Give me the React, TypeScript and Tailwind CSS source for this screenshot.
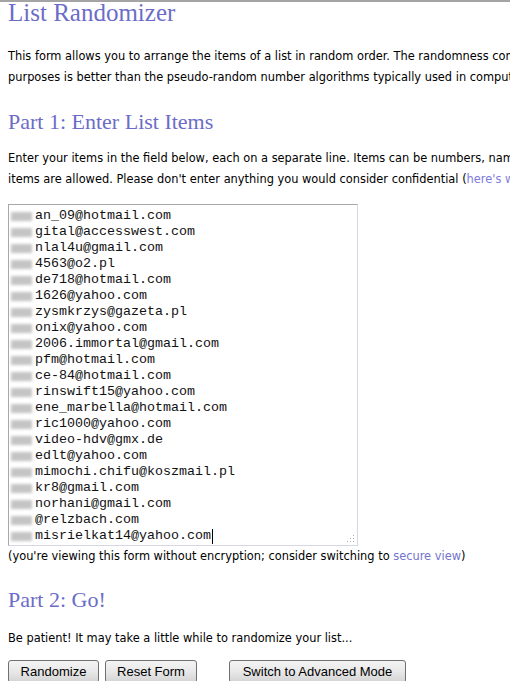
const ITEMS = [
  "an_09@hotmail.com",
  "gital@accesswest.com",
  "nlal4u@gmail.com",
  "4563@o2.pl",
  "de718@hotmail.com",
  "1626@yahoo.com",
  "zysmkrzys@gazeta.pl",
  "onix@yahoo.com",
  "2006.immortal@gmail.com",
  "pfm@hotmail.com",
  "ce-84@hotmail.com",
  "rinswift15@yahoo.com",
  "ene_marbella@hotmail.com",
  "ric1000@yahoo.com",
  "video-hdv@gmx.de",
  "edlt@yahoo.com",
  "mimochi.chifu@koszmail.pl",
  "kr8@gmail.com",
  "norhani@gmail.com",
  "@relzbach.com",
  "misrielkat14@yahoo.com",
];

function Blur() {
  return (
    <span className="inline-flex h-[16px] w-[24px] items-center align-top">
      <span className="block h-[9px] w-[21px] bg-[#c4c4c4] blur-[1.5px]" />
    </span>
  );
}

function Button({ children, className = "" }: { children: React.ReactNode; className?: string }) {
  return (
    <button
      className={`h-[23px] rounded-[3px] border border-[#707070] bg-gradient-to-b from-[#f4f4f4] via-[#e8e8e8] to-[#d4d4d4] text-[13px] leading-none text-black ${className}`}
      style={{ fontFamily: '"Liberation Sans", Arial, sans-serif' }}
    >
      {children}
    </button>
  );
}

export default function App() {
  const body = { fontFamily: '"DejaVu Sans", Verdana, sans-serif' };
  const serif = { fontFamily: '"Liberation Serif", "Times New Roman", serif' };

  return (
    <div className="h-[681px] w-[510px] overflow-hidden border-t-2 border-[#a4a4a4] bg-white">
      <div className="w-[900px] px-2 text-[11.4px] leading-[21px] text-black" style={body}>
        <h1 className="text-[25px] leading-[22px] text-[#6c6cc8]" style={serif}>
          List Randomizer
        </h1>

        <p className="mt-[22px] whitespace-nowrap">
          This form allows you to arrange the items of a list in random order. The randomness comes from atmospheric noise, which for many
          <br />
          purposes is better than the pseudo-random number algorithms typically used in computer programs.
        </p>

        <h2 className="mt-[21px] text-[22px] leading-[26px] text-[#6c6cc8]" style={serif}>
          Part 1: Enter List Items
        </h2>

        <p className="mt-[13px] whitespace-nowrap">
          Enter your items in the field below, each on a separate line. Items can be numbers, names, email addresses, etc. A maximum of 10,000
          <br />
          items are allowed. Please don't enter anything you would consider confidential (
          <span className="text-[#7c7cdc]">here's why</span>).
        </p>

        {/* list field */}
        <div className="relative mt-[14px] h-[342px] w-[350px] border border-t-[#a8a8a8] border-l-[#a8a8a8] border-r-[#d6d6e4] border-b-[#d6d6e4] pl-[2px] pt-[3px]">
          <div
            className="text-[13.33px] leading-[16px] text-[#111]"
            style={{ fontFamily: '"Liberation Mono", "Courier New", monospace' }}
          >
            {ITEMS.map((item, i) => (
              <div key={i} className="flex h-[16px] items-center whitespace-pre">
                <Blur />
                <span>{item}</span>
                {i === ITEMS.length - 1 && <span className="ml-px inline-block h-[15px] w-px bg-black" />}
              </div>
            ))}
          </div>
          <svg className="absolute bottom-[2px] right-[2px]" width="10" height="10" viewBox="0 0 10 10">
            <rect x="8" y="2" width="1" height="1" fill="#b0b0b0" />
            <rect x="5" y="5" width="1" height="1" fill="#b0b0b0" />
            <rect x="8" y="5" width="1" height="1" fill="#b0b0b0" />
            <rect x="2" y="8" width="1" height="1" fill="#b0b0b0" />
            <rect x="5" y="8" width="1" height="1" fill="#b0b0b0" />
            <rect x="8" y="8" width="1" height="1" fill="#b0b0b0" />
          </svg>
        </div>

        <p className="whitespace-nowrap">
          (you're viewing this form without encryption; consider switching to{" "}
          <span className="text-[#7474cc]">secure view</span>)
        </p>

        <h2 className="mt-[20px] text-[22px] leading-[26px] text-[#6c6cc8]" style={serif}>
          Part 2: Go!
        </h2>

        <p className="mt-[15px] whitespace-nowrap">Be patient! It may take a little while to randomize your list...</p>

        <div className="mt-[11px] flex items-start">
          <Button className="w-[91px]">Randomize</Button>
          <Button className="ml-[6px] w-[92px]">Reset Form</Button>
          <Button className="ml-[32px] w-[177px]">Switch to Advanced Mode</Button>
        </div>
      </div>
    </div>
  );
}
